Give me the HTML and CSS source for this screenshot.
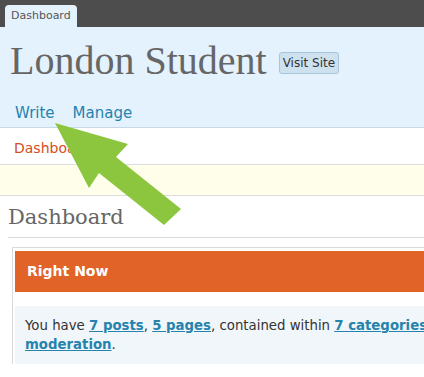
FILE: index.html
```html
<!DOCTYPE html>
<html lang="en">
  <head>
    <meta charset="UTF-8" />
    <meta name="viewport" content="width=device-width, initial-scale=1.0" />
    <title>Dashboard ‹ London Student</title>
    <link rel="stylesheet" href="styles.css">
  </head>
  <body>
    <div class="top-bar">
      <div class="tab">Dashboard</div>
    </div>
    <div class="head">
      <div class="blog-title">
        <h1>London Student</h1>
        <a class="visit-site" href="#">Visit Site</a>
      </div>
      <ul class="menu">
        <li><a href="#">Write</a></li>
        <li><a href="#">Manage</a></li>
      </ul>
    </div>
    <div class="submenu">
      <a href="#" class="current">Dashboard</a>
    </div>
    <div class="notice"></div>
    <div class="wrap">
      <h2>Dashboard</h2>
      <div class="widgets">
        <div class="widget-title">Right Now</div>
        <div class="widget-body">
          <p>You have <a href="#">7 posts</a>, <a href="#">5 pages</a>, contained within <a href="#">7 categories</a><br><a href="#">moderation</a>.</p>
        </div>
      </div>
    </div>

    <svg class="arrow" width="424" height="377" viewBox="0 0 424 377">
      <polygon points="55,123 128,144 116,157 181,209 164,225 99,173 89,188" fill="#8cc63f" />
    </svg>
  </body>
</html>
```

FILE: styles.css
```css
body {
  margin: 0;
  width: 424px;
  height: 377px;
  overflow: hidden;
  position: relative;
  background: #fff;
  font-family: "DejaVu Sans", Verdana, sans-serif;
}
.top-bar {
  background: #4d4d4d;
  height: 27px;
  display: flex;
  align-items: flex-end;
  padding-left: 5px;
}
.tab {
  background: #e4f2fd;
  color: #555;
  font-size: 11px;
  height: 22px;
  line-height: 22px;
  padding: 0 6px;
  border-radius: 4px 4px 0 0;
}
.head {
  background: #e4f2fd;
  border-bottom: 1px solid #c6d9e9;
  height: 100px;
}
.blog-title {
  display: flex;
  align-items: center;
  padding: 12px 0 0 10px;
  gap: 12px;
}
h1 {
  margin: 0;
  font-family: "Liberation Serif", Georgia, serif;
  font-weight: normal;
  font-size: 40px;
  color: #666;
  line-height: 44px;
}
.visit-site {
  font-size: 12px;
  color: #333;
  text-decoration: none;
  background: #cee1ef;
  border: 1px solid #a8c4db;
  border-radius: 3px;
  padding: 3px 3px;
  margin-top: 4px;
}
.menu {
  list-style: none;
  margin: 0;
  padding: 0 0 0 15px;
  display: flex;
  gap: 18px;
  margin-top: 20px;
}
.menu a {
  color: #2583ad;
  font-size: 15px;
  text-decoration: none;
}
.submenu {
  height: 37px;
  border-bottom: 1px solid #dcdcdc;
  display: flex;
  align-items: center;
  padding: 3px 0 0 14px;
  box-sizing: border-box;
}
.submenu a {
  color: #d54e21;
  font-size: 14px;
  text-decoration: none;
}
.notice {
  background: #fffeeb;
  height: 30px;
  border-bottom: 1px solid #dcdcdc;
}
.wrap {
  padding-left: 8px;
}
h2 {
  margin: 0;
  font-family: "DejaVu Serif", Georgia, serif;
  font-weight: normal;
  font-size: 21px;
  color: #666;
  height: 41px;
  line-height: 42px;
  border-bottom: 1px solid #dadada;
}
.widgets {
  margin: 9px 0 0 4px;
  border-top: 1px solid #dadada;
  border-left: 1px solid #dadada;
  padding: 3px 0 0 2px;
}
.widget-title {
  background: #e26327;
  color: #fff;
  font-weight: bold;
  font-size: 14px;
  height: 41px;
  line-height: 40px;
  padding-left: 12px;
}
.widget-body {
  background: #f1f6fa;
  margin-top: 14px;
  padding: 10px 0 10px 10px;
  white-space: nowrap;
}
.widget-body p {
  margin: 0;
  font-size: 13.3px;
  color: #333;
  line-height: 19px;
}
.widget-body a {
  color: #2583ad;
  font-weight: bold;
}
.arrow {
  position: absolute;
  top: 0;
  left: 0;
  pointer-events: none;
}
```
